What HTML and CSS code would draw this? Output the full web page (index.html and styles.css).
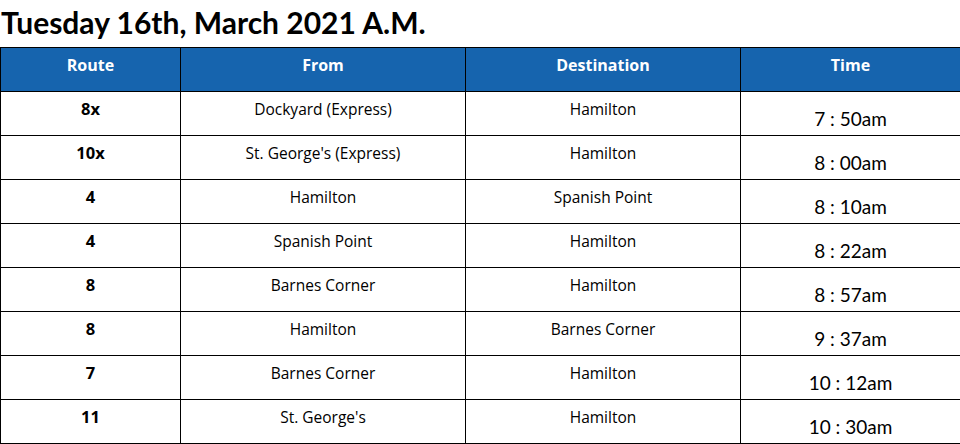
FILE: index.html
```html
<!DOCTYPE html>
<html>
<head>
<meta charset="utf-8">
<link rel="stylesheet" href="styles.css">
</head>
<body>
<h1 class="title">Tuesday 16th, March 2021 A.M.</h1>
<table class="schedule">
  <colgroup>
    <col class="c-route"><col class="c-from"><col class="c-dest"><col class="c-time">
  </colgroup>
  <thead>
    <tr><th>Route</th><th>From</th><th>Destination</th><th>Time</th></tr>
  </thead>
  <tbody>
    <tr><td class="route">8x</td><td>Dockyard (Express)</td><td>Hamilton</td><td class="time">7 : 50am</td></tr>
    <tr><td class="route">10x</td><td>St. George's (Express)</td><td>Hamilton</td><td class="time">8 : 00am</td></tr>
    <tr><td class="route">4</td><td>Hamilton</td><td>Spanish Point</td><td class="time">8 : 10am</td></tr>
    <tr><td class="route">4</td><td>Spanish Point</td><td>Hamilton</td><td class="time">8 : 22am</td></tr>
    <tr><td class="route">8</td><td>Barnes Corner</td><td>Hamilton</td><td class="time">8 : 57am</td></tr>
    <tr><td class="route">8</td><td>Hamilton</td><td>Barnes Corner</td><td class="time">9 : 37am</td></tr>
    <tr><td class="route">7</td><td>Barnes Corner</td><td>Hamilton</td><td class="time">10 : 12am</td></tr>
    <tr><td class="route">11</td><td>St. George's</td><td>Hamilton</td><td class="time">10 : 30am</td></tr>
  </tbody>
</table>
</body>
</html>
```
FILE: styles.css
```css
html, body {
  margin: 0;
  padding: 0;
  background: #fff;
}
.title {
  font-family: Lato, "Open Sans", sans-serif;
  font-weight: 700;
  font-size: 30px;
  line-height: 36px;
  margin: 4px 0 7px 1px;
  color: #000;
}
.schedule {
  border-collapse: collapse;
  width: 960px;
  table-layout: fixed;
  font-family: "Open Sans", sans-serif;
  font-size: 15.5px;
  color: #000;
}
.c-route { width: 180px; }
.c-from { width: 285px; }
.c-dest { width: 275px; }
.c-time { width: 220px; }
.schedule th,
.schedule td {
  border: 1px solid #000;
  text-align: center;
  vertical-align: top;
  height: 44px;
  box-sizing: border-box;
  padding: 0;
}
.schedule th {
  background: #1664ae;
  color: #fff;
  font-weight: 700;
  font-size: 16px;
  line-height: 22px;
  padding-top: 6px;
}
.schedule td {
  line-height: 20px;
  padding-top: 7px;
}
.schedule td.route {
  font-weight: 700;
  font-size: 16.5px;
}
.schedule td.time {
  font-family: Lato, sans-serif;
  font-size: 19px;
  line-height: 22px;
  padding-top: 16px;
}
```
